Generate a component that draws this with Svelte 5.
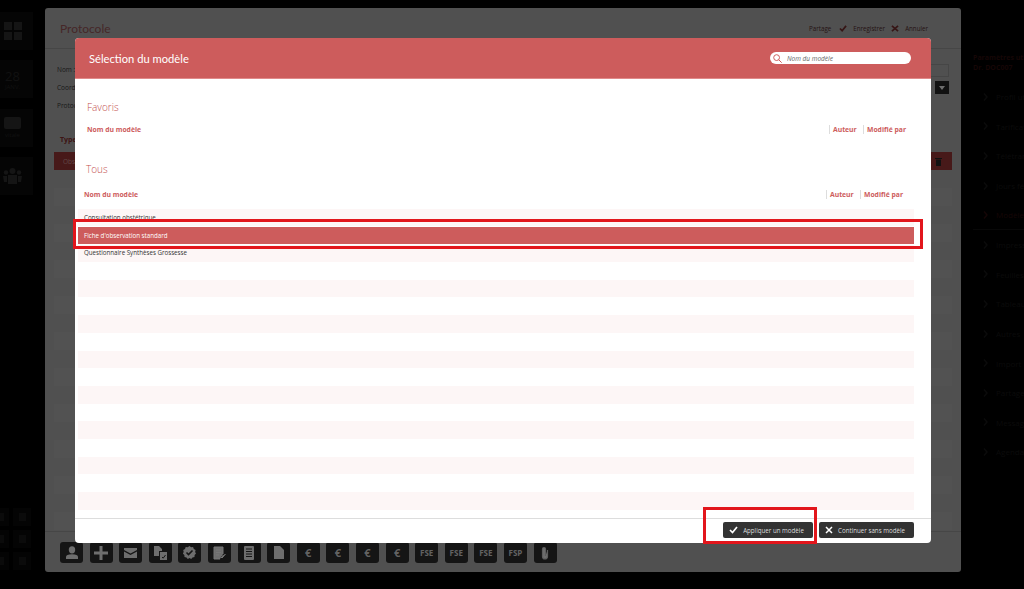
<script>
  const leftBottom = [0, 1, 2];
  const menu = ['Profil utilisateur', 'Tarification', 'Télétransmission', 'Jours fériés', 'Modèles', 'Impression', 'Feuilles de soins', 'Tableaux de bord', 'Autres', 'Import', 'Partage', 'Messagerie', 'Agenda'];
  const rows = [
    'Consultation obstétrique',
    "Fiche d'observation standard",
    'Questionnaire Synthèses Grossesse',
    ...Array(14).fill('')
  ];
  const money = ['€', '€', '€', '€'];
  const cards = ['FSE', 'FSE', 'FSE', 'FSP'];
</script>

<div class="page">
  <aside class="left">
    <div class="tile">
      <div class="squares"><i></i><i></i><i></i><i></i></div>
    </div>
    <div class="tile date"><b>28</b><span>JANV.</span></div>
    <div class="tile vitale"><em></em><span>vitale</span></div>
    <div class="tile">
      <svg width="19" height="16" viewBox="0 0 19 16"><circle cx="9.500" cy="3" r="3"/><circle cx="3" cy="4.500" r="2.200"/><circle cx="16" cy="4.500" r="2.200"/><path d="M5 7h9v9H5zM0 8h4v6H1zM15 8h4l-1 6h-3z"/></svg>
    </div>
    <div class="small">
      {#each leftBottom as s}
        <u></u><u></u>
      {/each}
    </div>
  </aside>

  <main class="panel">
    <header class="panel-head">
      <h2>Protocole</h2>
      <div class="actions">
        <span>Partage</span>
        <svg width="8" height="7" viewBox="0 0 9 8"><path d="M1 4l2.500 2.500L8 1" fill="none" stroke="#6c2a2a" stroke-width="2"/></svg>
        <span>Enregistrer</span>
        <svg width="8" height="7" viewBox="0 0 9 8"><path d="M1 1l7 6M8 1L1 7" fill="none" stroke="#6c2a2a" stroke-width="2"/></svg>
        <span>Annuler</span>
      </div>
    </header>
    <div class="panel-body">
      <p class="field">Nom :</p>
      <p class="field">Coordonnées</p>
      <p class="field">Protocole</p>
      <div class="right-fields">
        <div class="inp"></div>
        <div class="drop"><svg width="6" height="4" viewBox="0 0 6 4"><path d="M0 0h6L3 4z" fill="#ddd"/></svg></div>
      </div>
      <p class="type">Type</p>
      <div class="selected"><span>Observation</span>
        <svg width="7" height="9" viewBox="0 0 7 9"><path d="M0 1h7v1H0zM1 2.500h5V9H1z" fill="#222"/></svg>
      </div>
      <div class="stripes"></div>
    </div>
    <footer class="toolbar">
      <button aria-label="patient"><svg width="14" height="14" viewBox="0 0 14 14"><ellipse cx="7" cy="3.800" rx="3.200" ry="3.600"/><path d="M1 13v-2c0-1.800 2-2.800 6-2.800s6 1 6 2.800v2z"/></svg></button>
      <button aria-label="ajouter"><svg width="14" height="14" viewBox="0 0 14 14"><path d="M5.500 0h3v5.500H14v3H8.500V14h-3V8.500H0v-3h5.500z"/></svg></button>
      <button aria-label="courrier"><svg width="13" height="10" viewBox="0 0 13 10"><path d="M0 0h13v2L6.500 5.500 0 2zM0 3.500l6.500 3.500L13 3.500V10H0z"/></svg></button>
      <button aria-label="documents"><svg width="13" height="14" viewBox="0 0 13 14"><path d="M0 0h5l3 3v2H5v5H0z"/><path d="M6 6h7v8H6z"/><path d="M8 11l1.200 1.200L11.500 9" fill="none" stroke="#2a2a2a"/></svg></button>
      <button aria-label="valider"><svg width="13" height="13" viewBox="0 0 13 13"><path d="M6.500 0l1.600 1.200 2-.2.700 1.900 1.800 1-.5 2 .9 1.600-1.400 1.500-.1 2-2 .4-1.300 1.500-1.700-.9-1.700.9-1.300-1.500-2-.4-.1-2L-.2 7.500l.9-1.600-.5-2 1.800-1 .7-1.900 2 .2z"/><path d="M3.500 6.500l2 2 4-4" fill="none" stroke="#2a2a2a" stroke-width="1.600"/></svg></button>
      <button aria-label="ordonnance"><svg width="13" height="14" viewBox="0 0 13 14" fill="none" stroke="#eee"><path d="M7 13H1V1h9v7M3 4h5M3 6.500h5M3 9h3M7.500 10.500L9 12l3.500-4"/></svg></button>
      <button aria-label="fiche"><svg width="10" height="14" viewBox="0 0 10 14"><rect width="10" height="14" rx="1"/><path d="M2 3h6M2 5.500h6M2 8h6M2 10.500h6" stroke="#2a2a2a"/></svg></button>
      <button aria-label="page"><svg width="10" height="13" viewBox="0 0 10 13"><path d="M0 0h6l4 4v9H0z"/></svg></button>
      {#each money as m}
        <button class="txt euro">{m}</button>
      {/each}
      {#each cards as c}
        <button class="txt">{c}</button>
      {/each}
      <button aria-label="joindre"><svg width="8" height="14" viewBox="0 0 8 14" fill="none" stroke="#bbb" stroke-width="1.200"><path d="M6.500 4v6.500a2.500 2.500 0 0 1-5 0V3a1.500 1.500 0 0 1 3 0v7"/></svg></button>
    </footer>
  </main>

  <aside class="right">
    <p class="who">Paramètres utilisateur<br />Dr. DOC007</p>
    <ul>
      {#each menu as item, i}
        <li class:on={i === 4}>
          <svg width="5" height="8" viewBox="0 0 5 8"><path d="M1 0.500l3 3.500-3 3.500" fill="none" stroke="currentColor" stroke-width="1.400"/></svg>
          {item}
        </li>
      {/each}
    </ul>
  </aside>

  <div class="backdrop"></div>

  <section class="modal">
    <header class="modal-head">
      <h1>Sélection du modèle</h1>
      <label class="search">
        <svg width="9" height="9" viewBox="0 0 9 9" fill="none" stroke="#cd5c5c"><circle cx="3.600" cy="3.600" r="2.900"/><path d="M5.700 5.700l3 3"/></svg>
        <input placeholder="Nom du modèle" />
      </label>
    </header>

    <div class="modal-body">
      <div class="favs">
        <h3>Favoris</h3>
        <div class="cols">
          <span class="name">Nom du modèle</span><span class="auth">Auteur</span><span class="mod">Modifié par</span>
        </div>
      </div>
      <div class="all">
        <h3>Tous</h3>
        <div class="cols">
          <span class="name">Nom du modèle</span><span class="auth">Auteur</span><span class="mod">Modifié par</span>
        </div>
        <div class="rows">
          {#each rows as row, i}
            <div class="row" class:pink={i % 2 === 0} class:sel={i === 1}>{row}</div>
          {/each}
        </div>
      </div>
    </div>

    <footer class="modal-foot">
      <button class="dark apply">
        <svg width="9" height="8" viewBox="0 0 9 8"><path d="M1 4l2.500 2.500L8 1" fill="none" stroke="#fff" stroke-width="1.700"/></svg>
        Appliquer un modèle
      </button>
      <button class="dark skip">
        <svg width="8" height="8" viewBox="0 0 8 8"><path d="M1 1l6 6M7 1L1 7" fill="none" stroke="#fff" stroke-width="1.500"/></svg>
        Continuer sans modèle
      </button>
    </footer>
  </section>

  <div class="mark mark-row"></div>
  <div class="mark mark-btn"></div>
</div>

<style>
  :global(body) {
    margin: 0;
    background: #000;
  }

  .page {
    position: relative;
    width: 1024px;
    height: 589px;
    overflow: hidden;
    display: flex;
    font-family: "Open Sans", "Liberation Sans", sans-serif;
    background: #000;
  }

  .left {
    width: 41px;
    flex: none;
    margin: 0 12px 0 -8px;
    padding-top: 12px;
    display: flex;
    flex-direction: column;
    gap: 10.300px;
    color: #222;
  }

  .tile {
    height: 38px;
    background: #0a0a0a;
    display: flex;
    flex-direction: column;
    align-items: center;
    justify-content: center;
    font-size: 6px;
  }

  .tile svg {
    fill: #2a2a2a;
  }

  .squares {
    display: grid;
    grid-template-columns: 8px 8px;
    gap: 2px;
  }

  .squares i {
    height: 8px;
    background: #2a2a2a;
  }

  .date {
    padding-top: 2px;
    box-sizing: border-box;
  }

  .date b {
    font-weight: 400;
    font-size: 13px;
    line-height: 13px;
  }

  .vitale em {
    width: 17px;
    height: 12px;
    border-radius: 2px;
    background: #2a2a2a;
    margin-bottom: 2px;
  }

  .small {
    margin-top: auto;
    margin-bottom: 19px;
    display: grid;
    grid-template-columns: 18px 18px;
    gap: 4px;
    justify-content: end;
    padding-right: 2px;
  }

  .small u {
    height: 18px;
    background: #080808;
    display: flex;
    align-items: center;
    justify-content: center;
  }

  .small u::after {
    content: "";
    width: 7px;
    height: 8px;
    background: #161616;
  }

  .panel {
    width: 916px;
    height: 564px;
    flex: none;
    margin-top: 8px;
    border-radius: 3px;
    background: #a0a0a0;
    display: flex;
    flex-direction: column;
  }

  .panel-head {
    height: 40px;
    flex: none;
    border-bottom: 1px solid #8c8c8c;
    display: flex;
    align-items: center;
    justify-content: space-between;
    padding: 0 33px 0 15px;
  }

  h2 {
    margin: 0;
    font-family: Lato, sans-serif;
    font-size: 12px;
    font-weight: 400;
    color: #8c4f50;
  }

  .actions {
    display: flex;
    align-items: center;
    gap: 6px;
    font-size: 6.200px;
    color: #4c2a2a;
  }

  .actions span:first-child {
    margin-right: 2px;
  }

  .panel-body {
    flex: 1;
    min-height: 0;
    position: relative;
    display: flex;
    flex-direction: column;
    padding: 17px 9px 0;
    font-size: 6.500px;
    color: #333;
  }

  .field {
    margin: 0 0 10px 3px;
    line-height: 8px;
  }

  .right-fields {
    position: absolute;
    right: 12px;
    top: 15px;
    width: 60px;
    display: flex;
    flex-direction: column;
    align-items: flex-end;
    gap: 4px;
  }

  .inp {
    width: 60px;
    height: 13px;
    border: 1px solid #8c8c8c;
    box-sizing: border-box;
  }

  .drop {
    width: 14px;
    height: 13px;
    background: #222;
    display: flex;
    align-items: center;
    justify-content: center;
  }

  .type {
    margin: 15px 0 8px 6px;
    font-size: 7px;
    font-weight: 700;
    color: #7a2a2a;
  }

  .selected {
    height: 18px;
    flex: none;
    background: #8f3333;
    color: #c08a8a;
    display: flex;
    align-items: center;
    justify-content: space-between;
    padding: 0 10px 0 9px;
  }

  .stripes {
    flex: 1;
    margin-top: 18px;
    background: repeating-linear-gradient(#a5a5a5 0 18px, #a0a0a0 18px 36px);
  }

  .toolbar {
    height: 41px;
    flex: none;
    border-top: 1px solid #8c8c8c;
    box-sizing: border-box;
    padding: 10px 0 0 15px;
    display: flex;
    gap: 6.600px;
  }

  .toolbar button {
    width: 23px;
    height: 21px;
    padding: 0;
    border: 0;
    border-radius: 3px;
    background: #2a2a2a;
    color: #c4c4c4;
    font: 700 8px "Open Sans", sans-serif;
    display: flex;
    align-items: center;
    justify-content: center;
  }

  .toolbar svg {
    fill: #ddd;
  }

  .toolbar .euro {
    font-size: 11px;
  }

  .right {
    margin-left: 12px;
    width: 51px;
    flex: none;
    white-space: nowrap;
    padding-top: 53px;
    font-size: 8px;
    color: #161616;
  }

  .who {
    margin: 0;
    font-size: 7px;
    font-weight: 700;
    line-height: 10px;
    color: #2a0c0c;
  }

  .right ul {
    list-style: none;
    margin: 9px 0 0;
    padding: 0;
  }

  .right li {
    height: 29.600px;
    display: flex;
    align-items: center;
    gap: 8px;
    padding-left: 10px;
  }

  .right li svg {
    flex: none;
  }

  .right li.on {
    color: #2a0c0c;
    border-bottom: 1px solid #101010;
    box-sizing: border-box;
  }

  .backdrop {
    position: absolute;
    inset: 0;
    background: rgba(0, 0, 0, 0.5);
  }

  .modal {
    position: absolute;
    left: 75px;
    top: 38px;
    width: 856px;
    height: 505px;
    border-radius: 4px;
    overflow: hidden;
    background: #fff;
    display: flex;
    flex-direction: column;
  }

  .modal-head {
    height: 40px;
    flex: none;
    background: #cd5c5c;
    border-bottom: 1px solid #e08a8a;
    display: flex;
    align-items: center;
    justify-content: space-between;
    padding: 0 20px 0 14px;
  }

  h1 {
    margin: 0;
    font-family: Lato, sans-serif;
    font-size: 11.200px;
    font-weight: 400;
    color: #fff;
  }

  .search {
    width: 141px;
    height: 12px;
    box-sizing: border-box;
    border-radius: 6px;
    background: #fff;
    display: flex;
    align-items: center;
    gap: 5px;
    padding-left: 3px;
  }

  .search input {
    flex: 1;
    min-width: 0;
    border: 0;
    padding: 0;
    outline: 0;
    background: none;
    font: italic 6.500px "Open Sans", sans-serif;
  }

  .search input::placeholder {
    color: #666;
    opacity: 1;
  }

  .modal-body {
    flex: 1;
    min-height: 0;
  }

  h3 {
    margin: 0;
    font-family: "Open Sans", sans-serif;
    font-size: 10px;
    font-weight: 300;
    line-height: 14px;
    color: #c44f4f;
  }

  .favs {
    padding: 21px 14px 0 12px;
    height: 62px;
  }

  .cols {
    display: flex;
    align-items: center;
    font-size: 6.800px;
    font-weight: 700;
    color: #cd5c5c;
    margin-top: 11px;
    line-height: 9px;
  }

  .name {
    flex: 1;
  }

  .auth,
  .mod {
    border-left: 1px solid #ddd;
    padding-left: 3px;
    box-sizing: border-box;
  }

  .auth {
    width: 34px;
  }

  .mod {
    width: 54px;
  }

  .all {
    padding: 0 17px 0 3px;
  }

  .all h3 {
    padding-left: 8px;
  }

  .all .cols {
    padding-left: 6px;
    margin-top: 14px;
    margin-bottom: 10px;
  }

  .row {
    height: 17.700px;
    padding-left: 6px;
    font-size: 6.200px;
    line-height: 17.700px;
    color: #333;
  }

  .pink {
    background: #fdf6f6;
  }

  .sel {
    background: #cd5c5c;
    color: #fff;
    outline: 1px solid #fff;
  }

  .modal-foot {
    height: 25px;
    flex: none;
    border-top: 1px solid #ddd;
    display: flex;
    justify-content: flex-end;
    gap: 6px;
    padding: 3px 17px 0 0;
    box-sizing: border-box;
  }

  .dark {
    height: 16px;
    border: 0;
    border-radius: 2px;
    background: #333;
    color: #ddd;
    font: 6.200px "Open Sans", sans-serif;
    display: flex;
    align-items: center;
    justify-content: center;
    gap: 5px;
    padding: 0 3px 0 0;
  }

  .apply {
    width: 90px;
  }

  .skip {
    width: 95px;
  }

  .mark {
    position: absolute;
    box-sizing: border-box;
    border: 3px solid #e2161c;
  }

  .mark-row {
    left: 73px;
    top: 219px;
    width: 850px;
    height: 30px;
  }

  .mark-btn {
    left: 703px;
    top: 507px;
    width: 114px;
    height: 37px;
  }
</style>
